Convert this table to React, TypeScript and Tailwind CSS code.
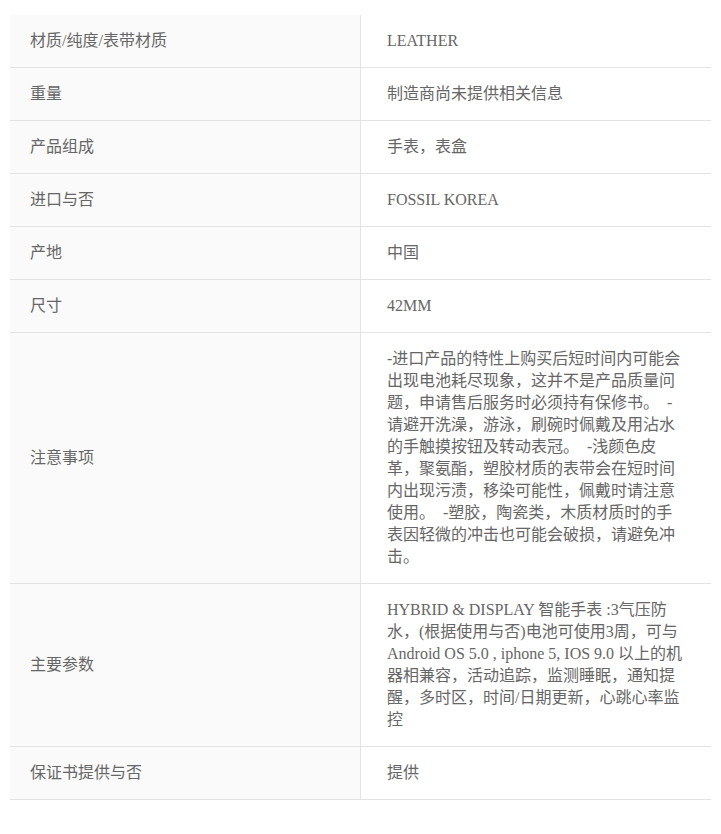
const rows: { label: string; value: string }[] = [
  { label: "材质/纯度/表带材质", value: "LEATHER" },
  { label: "重量", value: "制造商尚未提供相关信息" },
  { label: "产品组成", value: "手表，表盒" },
  { label: "进口与否", value: "FOSSIL KOREA" },
  { label: "产地", value: "中国" },
  { label: "尺寸", value: "42MM" },
  {
    label: "注意事项",
    value:
      "-进口产品的特性上购买后短时间内可能会出现电池耗尽现象，这并不是产品质量问题，申请售后服务时必须持有保修书。\u00a0 -请避开洗澡，游泳，刷碗时佩戴及用沾水的手触摸按钮及转动表冠。\u00a0 -浅颜色皮革，聚氨酯，塑胶材质的表带会在短时间内出现污渍，移染可能性，佩戴时请注意使用。\u00a0 -塑胶，陶瓷类，木质材质时的手表因轻微的冲击也可能会破损，请避免冲击。",
  },
  {
    label: "主要参数",
    value:
      "HYBRID & DISPLAY 智能手表 :3气压防水，(根据使用与否)电池可使用3周，可与Android OS 5.0 , iphone 5, IOS 9.0 以上的机器相兼容，活动追踪，监测睡眠，通知提醒，多时区，时间/日期更新，心跳心率监控",
  },
  { label: "保证书提供与否", value: "提供" },
];

export default function App() {
  return (
    <div className="min-h-screen bg-white px-[10px] pt-[15px] font-['Liberation_Serif','Noto_Sans_CJK_SC',serif] text-[16px] leading-[22px] text-[#666]">
      <div className="flex flex-col">
        {rows.map((row) => (
          <div className="grid grid-cols-[350px_1fr] border-b border-[#e3e3e3]" key={row.label}>
            <div className="flex items-center bg-[#fafafa] py-[15px] pl-[20px] pr-4">{row.label}</div>
            <div className="border-l border-[#e3e3e3] py-[15px] pl-[26px] pr-[27px] break-words">
              {row.value}
            </div>
          </div>
        ))}
      </div>
    </div>
  );
}
